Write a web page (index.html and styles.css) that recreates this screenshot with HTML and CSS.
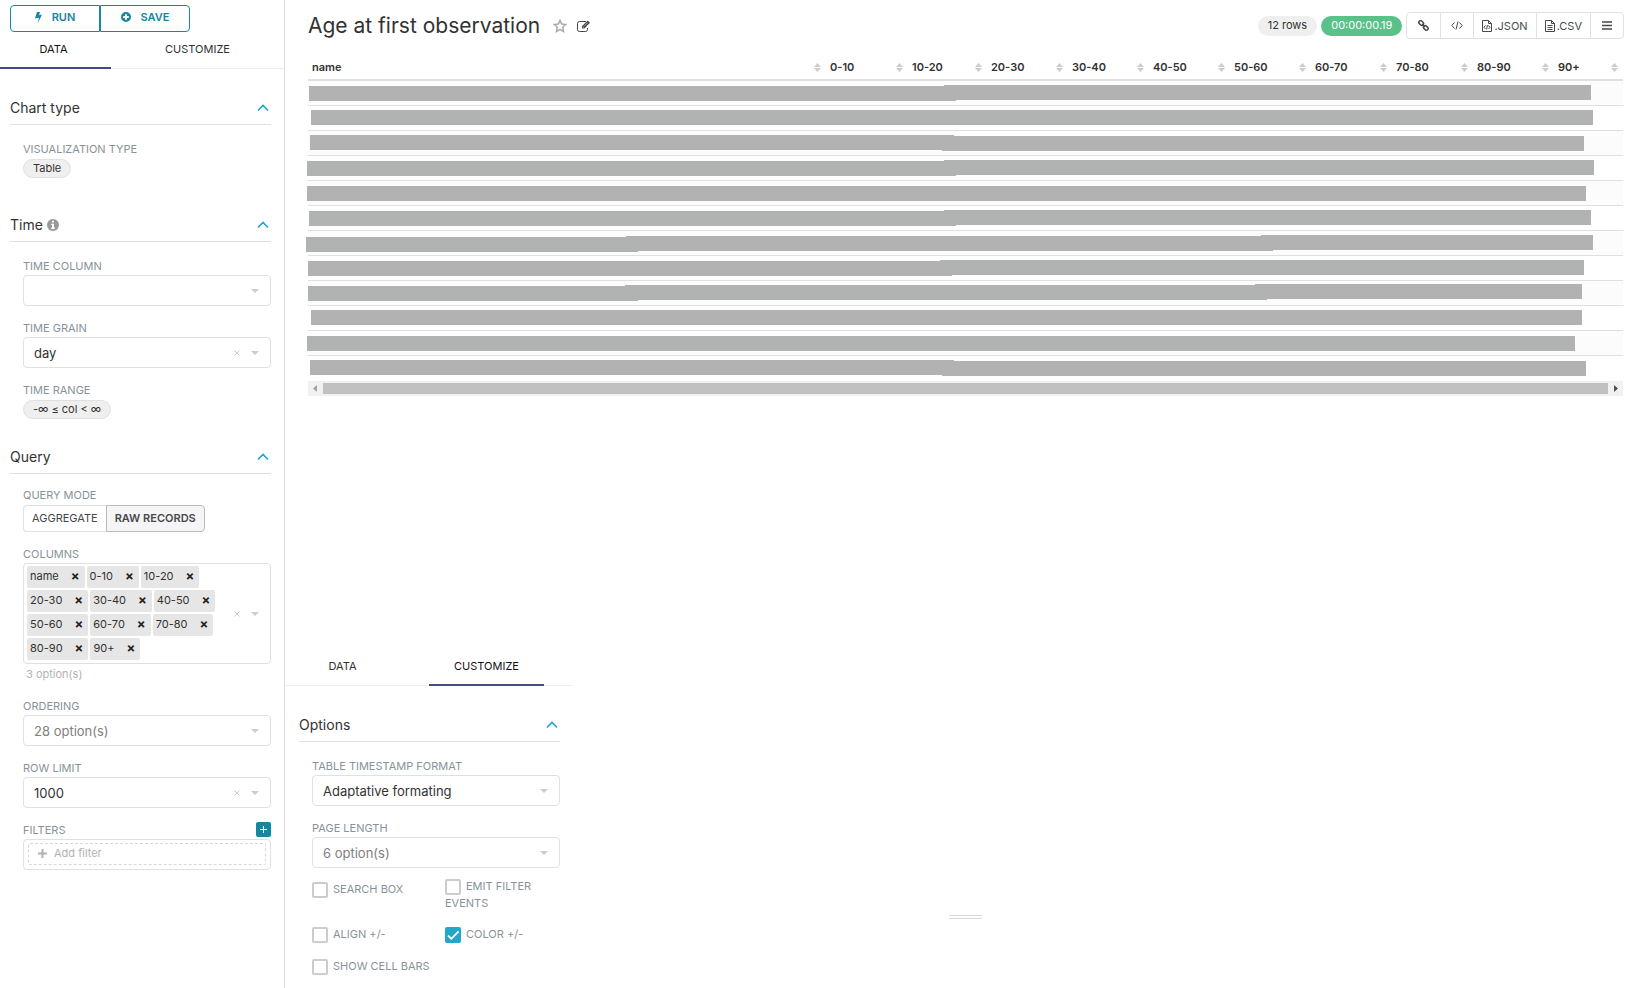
FILE: index.html
```html
<!DOCTYPE html>
<html lang="en">
<head>
<meta charset="utf-8">
<title>Age at first observation</title>
<link rel="stylesheet" href="styles.css">
</head>
<body>
<svg class="defs" aria-hidden="true">
  <symbol id="chevron" viewBox="0 0 12 8"><path d="M1 6.500 6 1.500 11 6.500" fill="none" stroke="#20a7c9" stroke-width="1.700"/></symbol>
  <symbol id="cross" viewBox="0 0 6 6"><path d="M.5 .5 5.500 5.500M5.500 .5 .5 5.500" fill="none" stroke="currentColor"/></symbol>
  <symbol id="sort" viewBox="0 0 7 9"><path d="M3.500 0 7 4H0zM0 5h7L3.500 9z" fill="#ccc"/></symbol>
</svg>
<div class="page">
  <aside class="sidebar">
    <div class="actions">
      <button type="button" class="action"><svg width="7" height="11" viewBox="0 0 7 11"><path d="M2 0h3L4 3.300l3-.7L3 11l.9-5.200L0 6.600z" fill="currentColor"/></svg>RUN</button>
      <button type="button" class="action"><svg width="10" height="10" viewBox="0 0 10 10"><path d="M5 0a5 5 0 1 0 0 10A5 5 0 0 0 5 0zM4 2.200h2V4h1.800v2H6v1.800H4V6H2.200V4H4z" fill="currentColor" fill-rule="evenodd"/></svg>SAVE</button>
    </div>
    <div class="tabs tabs-inset" role="tablist">
      <button type="button" role="tab" class="tab active" aria-selected="true">DATA</button>
      <button type="button" role="tab" class="tab">CUSTOMIZE</button>
    </div>

    <section class="section section-type">
      <h2 class="section-head">Chart type<svg class="chevron"><use href="#chevron"/></svg></h2>
      <div class="section-body">
        <div class="field">
          <span class="label">VISUALIZATION TYPE</span>
          <button type="button" class="pill">Table</button>
        </div>
      </div>
    </section>

    <section class="section section-time">
      <h2 class="section-head"><span class="with-icon">Time<svg width="12" height="12" viewBox="0 0 12 12"><circle cx="6" cy="6" r="6" fill="#999"/><path d="M5 1.800h2v1.700H5zM4.200 4.700H7v3.800h.8V10H4.200V8.500H5V6.100h-.8z" fill="#fff"/></svg></span><svg class="chevron"><use href="#chevron"/></svg></h2>
      <div class="section-body">
        <div class="field">
          <label class="label" for="time-column">TIME COLUMN</label>
          <div class="select"><select id="time-column"><option></option></select></div>
        </div>
        <div class="field">
          <label class="label" for="time-grain">TIME GRAIN</label>
          <div class="select"><select id="time-grain"><option>day</option></select><button type="button" class="clear" aria-label="Clear"><svg><use href="#cross"/></svg></button></div>
        </div>
        <div class="field">
          <span class="label">TIME RANGE</span>
          <button type="button" class="pill">-∞ ≤ col &lt; ∞</button>
        </div>
      </div>
    </section>

    <section class="section section-query">
      <h2 class="section-head">Query<svg class="chevron"><use href="#chevron"/></svg></h2>
      <div class="section-body">
        <div class="field field-mode">
          <span class="label">QUERY MODE</span>
          <div class="toggle">
            <button type="button" class="toggle-item">AGGREGATE</button>
            <button type="button" class="toggle-item chosen">RAW RECORDS</button>
          </div>
        </div>
        <div class="field field-columns">
          <span class="label">COLUMNS</span>
          <div class="select tags-box">
            <div class="tags">
              <span class="tag">name<button type="button" aria-label="Remove name">×</button></span>
              <span class="tag">0-10<button type="button" aria-label="Remove 0-10">×</button></span>
              <span class="tag">10-20<button type="button" aria-label="Remove 10-20">×</button></span>
              <span class="tag">20-30<button type="button" aria-label="Remove 20-30">×</button></span>
              <span class="tag">30-40<button type="button" aria-label="Remove 30-40">×</button></span>
              <span class="tag">40-50<button type="button" aria-label="Remove 40-50">×</button></span>
              <span class="tag">50-60<button type="button" aria-label="Remove 50-60">×</button></span>
              <span class="tag">60-70<button type="button" aria-label="Remove 60-70">×</button></span>
              <span class="tag">70-80<button type="button" aria-label="Remove 70-80">×</button></span>
              <span class="tag">80-90<button type="button" aria-label="Remove 80-90">×</button></span>
              <span class="tag">90+<button type="button" aria-label="Remove 90+">×</button></span>
            </div>
            <button type="button" class="clear" aria-label="Clear all"><svg><use href="#cross"/></svg></button>
          </div>
          <p class="help">3 option(s)</p>
        </div>
        <div class="field">
          <label class="label" for="ordering">ORDERING</label>
          <div class="select"><select id="ordering" class="placeholder"><option>28 option(s)</option></select></div>
        </div>
        <div class="field">
          <label class="label" for="row-limit">ROW LIMIT</label>
          <div class="select"><select id="row-limit"><option>1000</option></select><button type="button" class="clear" aria-label="Clear"><svg><use href="#cross"/></svg></button></div>
        </div>
        <div class="field">
          <div class="label-row">
            <span class="label">FILTERS</span>
            <button type="button" class="plus" aria-label="Add"><svg width="9" height="9" viewBox="0 0 9 9"><path d="M4.500 1v7M1 4.500h7" stroke="#fff"/></svg></button>
          </div>
          <div class="filters">
            <button type="button" class="add-filter"><svg width="9" height="9" viewBox="0 0 9 9"><path d="M4.500 0v9M0 4.500h9" stroke="currentColor" stroke-width="2"/></svg>Add filter</button>
          </div>
        </div>
      </div>
    </section>
  </aside>

  <main class="main">
    <header class="chart-head">
      <h1 class="title">Age at first observation</h1>
      <button type="button" class="icon-button" aria-label="Favorite"><svg width="14" height="14" viewBox="0 0 14 14"><path d="M7 1.400 8.700 5l4 .5-2.900 2.700.7 4.300L7 10.400l-3.500 2.100.7-4.300L1.300 5.500l4-.5z" fill="none" stroke="#aaa" stroke-width="1.500"/></svg></button>
      <button type="button" class="icon-button" aria-label="Edit"><svg width="14" height="12" viewBox="0 0 14 12"><path d="M9 1.500H2.500a2 2 0 0 0-2 2v6a2 2 0 0 0 2 2h6a2 2 0 0 0 2-2V8" fill="none" stroke="#444"/><path d="M10.800.6 13 2.700 7.300 8.500H5V6.300z" fill="#444"/><path d="M6 6.800 7 7.700M7.500 5.800 10.700 2.600" stroke="#fff" stroke-width=".6"/></svg></button>
      <div class="tools">
        <span class="badge">12 rows</span>
        <span class="badge badge-time">00:00:00.19</span>
        <div class="group">
          <button type="button" class="tool" aria-label="Copy link"><svg width="11" height="11" viewBox="0 0 11 11" fill="none" stroke="currentColor" stroke-width="1.500"><rect x="-2.500" y="-1.700" width="5" height="3.400" rx="1.500" transform="translate(3.200 3) rotate(45)"/><rect x="-2.500" y="-1.700" width="5" height="3.400" rx="1.500" transform="translate(7.800 7.900) rotate(45)"/><path d="M4 4l3 3"/></svg></button>
          <button type="button" class="tool" aria-label="Embed code"><svg width="12" height="9" viewBox="0 0 12 9" fill="none" stroke="currentColor"><path d="M3.500 1.500.8 4.500l2.700 3M8.500 1.500l2.700 3-2.700 3M7 .5 5 8.500"/></svg></button>
          <button type="button" class="tool"><svg width="10" height="12" viewBox="0 0 10 12" fill="none" stroke="currentColor"><path d="M.5.5h6l3 3v8h-9zM6.500.5v3h3M3.500 5.500 2 7.300l1.500 1.700M6.500 5.500 8 7.300 6.500 9M5.400 5 4.600 9.500"/></svg>.JSON</button>
          <button type="button" class="tool"><svg width="10" height="12" viewBox="0 0 10 12" fill="none" stroke="currentColor"><path d="M.5.5h6l3 3v8h-9zM6.500.5v3h3M2.500 5.500h5M2.500 7.500h5M2.500 9.500h5"/></svg>.CSV</button>
          <button type="button" class="tool" aria-label="Menu"><svg width="10" height="9" viewBox="0 0 10 9"><path d="M0 1h10M0 4.500h10M0 8h10" stroke="currentColor" stroke-width="1.600"/></svg></button>
        </div>
      </div>
    </header>

    <div class="table-wrap">
      <table class="table">
        <colgroup><col><col class="c-wide"><col class="c-narrow"><col class="c-mid"><col class="c-mid"><col class="c-mid"><col class="c-mid"><col class="c-mid"><col class="c-mid"><col class="c-mid"><col class="c-last"></colgroup>
        <thead>
          <tr>
            <th scope="col"><span>name<svg class="sort"><use href="#sort"/></svg></span></th>
            <th scope="col"><span>0-10<svg class="sort"><use href="#sort"/></svg></span></th>
            <th scope="col"><span>10-20<svg class="sort"><use href="#sort"/></svg></span></th>
            <th scope="col"><span>20-30<svg class="sort"><use href="#sort"/></svg></span></th>
            <th scope="col"><span>30-40<svg class="sort"><use href="#sort"/></svg></span></th>
            <th scope="col"><span>40-50<svg class="sort"><use href="#sort"/></svg></span></th>
            <th scope="col"><span>50-60<svg class="sort"><use href="#sort"/></svg></span></th>
            <th scope="col"><span>60-70<svg class="sort"><use href="#sort"/></svg></span></th>
            <th scope="col"><span>70-80<svg class="sort"><use href="#sort"/></svg></span></th>
            <th scope="col"><span>80-90<svg class="sort"><use href="#sort"/></svg></span></th>
            <th scope="col"><span>90+<svg class="sort"><use href="#sort"/></svg></span></th>
          </tr>
        </thead>
        <tbody>
          <tr><td colspan="11"><svg class="bar" viewBox="0 0 1315 24" preserveAspectRatio="none"><path d="M1 5h647v15H1zM636 4h647v15H636z"/></svg></td></tr>
          <tr><td colspan="11"><svg class="bar" viewBox="0 0 1315 24" preserveAspectRatio="none"><path d="M3 4h1282v15H3z"/></svg></td></tr>
          <tr><td colspan="11"><svg class="bar" viewBox="0 0 1315 24" preserveAspectRatio="none"><path d="M2 4h644v15H2zM634 5h642v15H634z"/></svg></td></tr>
          <tr><td colspan="11"><svg class="bar" viewBox="0 0 1315 24" preserveAspectRatio="none"><path d="M-1 5h649v15H-1zM636 4h650v15H636z"/></svg></td></tr>
          <tr><td colspan="11"><svg class="bar" viewBox="0 0 1315 24" preserveAspectRatio="none"><path d="M-1 5h1279v15H-1z"/></svg></td></tr>
          <tr><td colspan="11"><svg class="bar" viewBox="0 0 1315 24" preserveAspectRatio="none"><path d="M1 5h647v15H1zM636 4h647v15H636z"/></svg></td></tr>
          <tr><td colspan="11"><svg class="bar" viewBox="0 0 1315 24" preserveAspectRatio="none"><path d="M-2 6h332v15H-2zM318 5h647v15H318zM953 4h332v15H953z"/></svg></td></tr>
          <tr><td colspan="11"><svg class="bar" viewBox="0 0 1315 24" preserveAspectRatio="none"><path d="M0 5h644v15H0zM632 4h644v15H632z"/></svg></td></tr>
          <tr><td colspan="11"><svg class="bar" viewBox="0 0 1315 24" preserveAspectRatio="none"><path d="M0 5h330v15H0zM317 4h642v15H317zM947 3h327v15H947z"/></svg></td></tr>
          <tr><td colspan="11"><svg class="bar" viewBox="0 0 1315 24" preserveAspectRatio="none"><path d="M3 4h1271v15H3z"/></svg></td></tr>
          <tr><td colspan="11"><svg class="bar" viewBox="0 0 1315 24" preserveAspectRatio="none"><path d="M-1 5h1268v15H-1z"/></svg></td></tr>
          <tr><td colspan="11"><svg class="bar" viewBox="0 0 1315 24" preserveAspectRatio="none"><path d="M2 4h644v15H2zM634 5h644v15H634z"/></svg></td></tr>
        </tbody>
      </table>
      <div class="scrollbar">
        <svg width="4" height="7" viewBox="0 0 4 7"><path d="M4 0v7L0 3.500z" fill="#a3a3a3"/></svg>
        <div class="thumb"></div>
        <svg width="4" height="7" viewBox="0 0 4 7"><path d="M0 0v7l4-3.500z" fill="#505050"/></svg>
      </div>
    </div>

    <div class="lower">
      <div class="customize">
        <div class="tabs" role="tablist">
          <button type="button" role="tab" class="tab">DATA</button>
          <button type="button" role="tab" class="tab active" aria-selected="true">CUSTOMIZE</button>
        </div>
        <section class="section section-options">
          <h2 class="section-head">Options<svg class="chevron"><use href="#chevron"/></svg></h2>
          <div class="section-body">
            <div class="field">
              <label class="label" for="timestamp">TABLE TIMESTAMP FORMAT</label>
              <div class="select"><select id="timestamp"><option>Adaptative formating</option></select></div>
            </div>
            <div class="field">
              <label class="label" for="page-length">PAGE LENGTH</label>
              <div class="select"><select id="page-length" class="placeholder"><option>6 option(s)</option></select></div>
            </div>
            <div class="checks">
              <label class="check check-first"><input type="checkbox">SEARCH BOX</label>
              <label class="check"><input type="checkbox">EMIT FILTER EVENTS</label>
              <label class="check"><input type="checkbox">ALIGN +/-</label>
              <label class="check"><input type="checkbox" checked>COLOR +/-</label>
              <label class="check"><input type="checkbox">SHOW CELL BARS</label>
            </div>
          </div>
        </section>
      </div>
      <div class="drag-handle"></div>
    </div>
  </main>
</div>
</body>
</html>
```

FILE: styles.css
```css
* { box-sizing: border-box; }

body {
  margin: 0;
  background: #fff;
  color: #323232;
  font-family: Inter, "Liberation Sans", sans-serif;
  font-size: 11px;
  font-optical-sizing: none;
  line-height: 16px;
}

button, select, input { font: inherit; font-optical-sizing: inherit; color: inherit; margin: 0; }
button { background: none; border: 0; padding: 0; cursor: pointer; }
svg { display: block; flex: none; }
h1, h2, p { margin: 0; font-weight: 400; }

.defs { position: absolute; width: 0; height: 0; }

.page { display: flex; min-height: 100vh; }

/* Sidebar */
.sidebar {
  flex: none;
  width: 285px;
  border-right: 1px solid #e0e0e0;
  overflow: hidden;
}

.actions { display: flex; padding: 5px 10px 0; }
.action {
  display: flex;
  align-items: center;
  justify-content: center;
  gap: 10px;
  width: 90px;
  height: 27px;
  padding-bottom: 3px;
  border: 1px solid #1a85a0;
  border-radius: 4px 0 0 4px;
  color: #1a85a0;
  font-weight: 600;
}
.action + .action { border-radius: 0 4px 4px 0; }

.tabs {
  display: flex;
  gap: 29px;
  width: 288px;
  height: 37px;
  border-bottom: 1px solid #ededed;
}
.tabs-inset { margin-left: -4px; }
.tab {
  width: 115px;
  height: 37px;
  padding-bottom: 2px;
  border-bottom: 2px solid transparent;
}
.tab.active { border-bottom-color: #444e7c; color: #111; }

.section { padding: 0 13px 0 10px; }
.section-type { padding-top: 27px; }
.section-time { padding-top: 35px; }
.section-query { padding-top: 26px; }
.section-options { padding: 27px 13px 0 14px; }
.section-head {
  display: flex;
  align-items: center;
  justify-content: space-between;
  padding: 0 2px 4px 0;
  border-bottom: 1px solid #e0e0e0;
  font-size: 14px;
  line-height: 24px;
}
.with-icon { display: flex; align-items: center; gap: 4px; }
.chevron { width: 12px; height: 8px; }
.section-body {
  display: flex;
  flex-direction: column;
  gap: 14px;
  padding: 16px 0 0 13px;
}
.section-query .section-body { padding-top: 13px; }

.label { display: block; margin-bottom: 1px; color: #879399; }
.label-row { display: flex; justify-content: space-between; }
.pill {
  display: block;
  height: 19px;
  margin-top: 2px;
  padding: 0 9px 1px;
  border: 1px solid #e0e0e0;
  border-radius: 10px;
  background: #efefef;
}

.select { position: relative; }
.select select {
  display: block;
  width: 100%;
  height: 31px;
  padding: 0 50px 0 10px;
  border: 1px solid #e0e0e0;
  border-radius: 4px;
  background: #fff;
  appearance: none;
  font-size: 13px;
}
.select .placeholder { color: #808080; }
.select::after {
  content: "";
  position: absolute;
  top: 50%;
  right: 12px;
  margin-top: -2px;
  border: 4px solid transparent;
  border-top-color: #ccc;
  border-bottom: 0;
}
.clear {
  position: absolute;
  top: 50%;
  right: 31px;
  margin-top: -3px;
  color: #ccc;
}
.clear svg { width: 6px; height: 6px; }

.field-columns { margin-bottom: 2px; }
.toggle { display: flex; margin-top: 2px; }
.toggle-item {
  height: 27px;
  padding: 0 8px 1px;
  border: 1px solid #e0e0e0;
  border-right: 0;
  border-radius: 4px 0 0 4px;
  color: #484848;
}
.toggle-item.chosen {
  border: 1px solid #bbb;
  border-radius: 0 4px 4px 0;
  background: #f5f5f8;
  font-weight: 600;
}

.tags-box {
  border: 1px solid #e0e0e0;
  border-radius: 4px;
  padding: 2px 50px 3px 3px;
}
.tags-box::after { right: 11px; }
.tags-box .clear { right: 30px; }
.tags { display: flex; flex-wrap: wrap; gap: 2px; }
.tag {
  display: flex;
  align-items: center;
  gap: 12px;
  height: 22px;
  padding: 0 5px 2px 3px;
  border-radius: 2px;
  background: #e6e6e6;
}
.tag button { font-size: 13px; font-weight: 700; color: #222; }
.help { padding: 2px 0 0 3px; color: #b2b2b2; }

.plus {
  display: grid;
  place-items: center;
  width: 15px;
  height: 15px;
  border-radius: 2px;
  background: #1a85a0;
}
.filters {
  padding: 3px 4px 4px;
  border: 1px solid #e0e0e0;
  border-radius: 4px;
}
.add-filter {
  display: flex;
  align-items: center;
  gap: 7px;
  width: 100%;
  height: 22px;
  padding: 0 9px 2px;
  border: 1px dashed #d9d9d9;
  border-radius: 2px;
  color: #b2b2b2;
}

/* Chart */
.main {
  flex: 1;
  min-width: 0;
  display: flex;
  flex-direction: column;
}
.chart-head {
  display: flex;
  align-items: center;
  padding: 12px 13px 0 23px;
}
.title { margin-right: 13px; font-size: 21px; line-height: 27px; }
.icon-button { margin-right: 10px; }
.tools { display: flex; align-items: center; gap: 4px; margin-left: auto; }
.badge {
  padding: 1px 10px 3px;
  border-radius: 10px;
  background: #efefef;
}
.badge-time { background: #5ac189; color: #fff; }
.group {
  display: flex;
  border: 1px solid #e0e0e0;
  border-radius: 4px;
}
.tool {
  display: flex;
  align-items: center;
  justify-content: center;
  gap: 2px;
  min-width: 33px;
  height: 25px;
  padding: 0 8px;
  color: #484848;
}
.tool + .tool { border-left: 1px solid #e0e0e0; }

.table-wrap { margin: 13px 14px 0 23px; }
.table {
  width: 100%;
  border-collapse: separate;
  border-spacing: 0;
  table-layout: fixed;
}
.c-wide { width: 82px; }
.c-mid { width: 81px; }
.c-narrow { width: 79px; }
.c-last { width: 69px; }
.table th {
  padding: 7px 5px 4px 4px;
  border-bottom: 2px solid #e0e0e0;
  font-weight: 600;
  text-align: left;
}
.table th span { display: flex; align-items: center; justify-content: space-between; }
.sort { width: 7px; height: 9px; }
.table td { padding: 0; border-bottom: 1px solid #e0e0e0; }
.table tr:last-child td { border-bottom-color: transparent; }
.table tbody tr:nth-child(odd) { background: #fcfcfc; }
.bar { width: 100%; height: 24px; overflow: visible; fill: #b1b3b2; }

.scrollbar {
  display: flex;
  align-items: center;
  gap: 6px;
  height: 15px;
  padding: 0 5px;
  background: #f1f1f1;
}
.thumb { flex: 1; height: 11px; background: #c1c1c1; }

/* Customize panel */
.lower { display: grid; margin-top: auto; padding-bottom: 13px; }
.customize { grid-area: 1 / 1; width: 288px; }
.checks {
  display: grid;
  grid-template-columns: 133px 115px;
  row-gap: 15px;
  margin-top: -4px;
  color: #879399;
}
.check { line-height: 16px; }
.check-first { padding-top: 3px; }
.check input {
  appearance: none;
  width: 16px;
  height: 16px;
  margin-right: 5px;
  border: 2px solid #ccc;
  border-radius: 2px;
  vertical-align: middle;
}
.check input:checked {
  border: 0;
  background: #20a7c9 url("data:image/svg+xml,%3Csvg xmlns='http://www.w3.org/2000/svg' viewBox='0 0 16 16'%3E%3Cpath d='M3 8.500 6.300 11.800 13.500 4.500' fill='none' stroke='white' stroke-width='1.800'/%3E%3C/svg%3E");
}
.drag-handle {
  grid-area: 1 / 1;
  justify-self: center;
  align-self: end;
  width: 33px;
  height: 4px;
  margin: 0 0 56px 9px;
  border: solid #d9d9d9;
  border-width: 1px 0;
}
```
